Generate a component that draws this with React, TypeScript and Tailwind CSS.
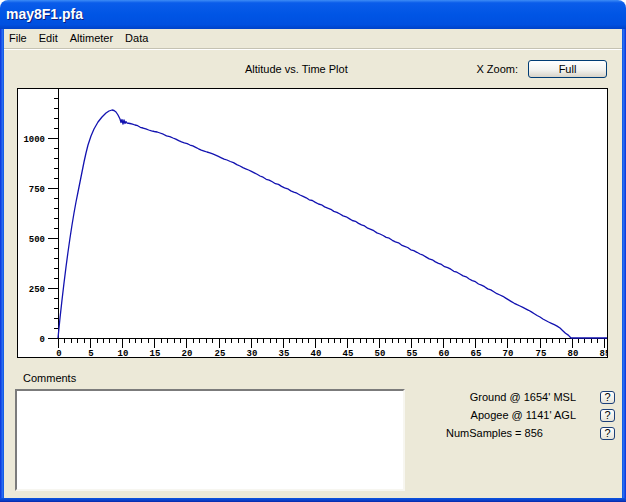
import React from 'react';

// plot geometry (svg coords, box origin at page 17,88)
const PLOT_W = 591;
const PLOT_H = 270;
const OX = 41;
const OY = 250;
const PX_PER_SEC = 6.42;
const PX_PER_FT = 0.2;

// altitude trace, traced in page pixels
const anchors: [number, number][] = [
  [58, 338], [60, 318], [62, 300], [64, 283], [66, 267], [68, 252], [70, 238],
  [72, 225], [74, 213], [76, 202], [78, 192], [80, 182], [82, 172], [84, 162],
  [86, 153], [88, 145], [91, 136], [94, 129], [98, 122], [102, 117], [106, 113],
  [109, 111], [112, 110], [114, 110.5],
  [116, 112], [118, 115], [120, 119], [121, 122.5], [122, 119.5], [123, 124],
  [124, 120], [125, 123.5], [126, 121.5], [127, 123], [130, 123.5], [135, 125],
  [143, 128], [160, 133], [173, 138], [190, 145], [207, 152], [227, 160],
  [240, 166], [260, 176], [300, 195], [340, 214], [380, 234], [420, 254],
  [460, 274], [500, 295], [520, 306], [540, 317], [560, 328], [571, 338], [607, 338],
];

function buildTrace() {
  const out: string[] = [];
  for (let i = 0; i < anchors.length - 1; i++) {
    const [x1, y1] = anchors[i];
    const [x2, y2] = anchors[i + 1];
    const steps = x1 >= 130 && x2 <= 571 ? Math.max(1, Math.round((x2 - x1) / 3)) : 1;
    for (let k = 0; k < steps; k++) {
      const t = k / steps;
      const x = x1 + (x2 - x1) * t;
      let y = y1 + (y2 - y1) * t;
      if (k > 0) y += Math.sin(x * 12.9898) * 0.4;
      out.push(`${(x - 17).toFixed(1)},${(y - 88).toFixed(1)}`);
    }
  }
  const [lx, ly] = anchors[anchors.length - 1];
  out.push(`${lx - 17},${ly - 88}`);
  return out.join(' ');
}

function AltitudePlot() {
  const xTicks = Array.from({ length: 86 }, (_, s) => s);
  const yTicks = Array.from({ length: 25 }, (_, i) => i * 50);

  return (
    <svg width={PLOT_W} height={PLOT_H} className="block bg-white">
      <g stroke="#000" strokeWidth={1} shapeRendering="crispEdges">
        <line x1={OX + 0.5} y1={0} x2={OX + 0.5} y2={OY + 1} />
        <line x1={OX} y1={OY + 0.5} x2={PLOT_W} y2={OY + 0.5} />
        {yTicks.map((v) => {
          const y = OY - v * PX_PER_FT + 0.5;
          const major = v % 250 === 0;
          return <line key={v} x1={major ? 31 : 37} y1={y} x2={OX} y2={y} />;
        })}
        {xTicks.map((s) => {
          const x = Math.round(OX + s * PX_PER_SEC) + 0.5;
          const major = s % 5 === 0;
          return <line key={s} x1={x} y1={OY} x2={x} y2={OY + (major ? 10 : 5)} />;
        })}
      </g>

      <g fontFamily="'Liberation Mono', 'DejaVu Sans Mono', monospace" fontWeight="bold" fontSize={9} fill="#000">
        {[0, 250, 500, 750, 1000].map((v) => (
          <text key={v} x={28} y={OY - v * PX_PER_FT + 3.5} textAnchor="end">
            {v}
          </text>
        ))}
        {xTicks
          .filter((s) => s % 5 === 0)
          .map((s) => (
            <text key={s} x={Math.round(OX + s * PX_PER_SEC) + 1} y={268} textAnchor="middle">
              {s}
            </text>
          ))}
      </g>

      <polyline points={buildTrace()} fill="none" stroke="#1212b0" strokeWidth={1.3} strokeLinejoin="round" />

      <rect x={0.5} y={0.5} width={PLOT_W - 1} height={PLOT_H - 1} fill="none" stroke="#000" shapeRendering="crispEdges" />
    </svg>
  );
}

function HelpButton() {
  return (
    <button className="w-[15px] h-[13px] flex items-center justify-center rounded-[3px] border border-[#1c3f78] bg-[linear-gradient(180deg,#ffffff,#e6e4da)] text-[11px] leading-none text-black">
      ?
    </button>
  );
}

export default function App() {
  return (
    <div className="w-[626px] h-[502px] bg-white font-['Liberation_Sans',Arial,sans-serif] text-black text-[11px]">
      <div className="h-full flex flex-col rounded-t-[8px] overflow-hidden">
        {/* title bar */}
        <div className="h-[29px] shrink-0 flex items-center pl-[6px] bg-[linear-gradient(180deg,#3d8cf6_0%,#0a5cea_10%,#0055e5_50%,#0050e0_85%,#0042c8_100%)]">
          <span className="text-white font-bold text-[14px] [text-shadow:1px_1px_0_#0a1e7e]">may8F1.pfa</span>
        </div>

        <div className="flex-1 flex">
          <div className="w-[4px] bg-[linear-gradient(90deg,#0831d9,#2a6ef2_60%,#0b55e0)]" />

          <div className="flex-1 flex flex-col bg-[#ECE9D8]">
            {/* menu bar */}
            <div className="h-[19px] flex items-center gap-[12px] pl-[5px]">
              <span>File</span>
              <span>Edit</span>
              <span>Altimeter</span>
              <span>Data</span>
            </div>
            <div className="h-px bg-[#c5c2b2]" />
            <div className="h-px bg-white" />

            {/* plot header */}
            <div className="mt-[10px] h-[18px] flex items-center">
              <span className="ml-[241px]">Altitude vs. Time Plot</span>
              <span className="ml-auto mr-[10px]">X Zoom:</span>
              <button className="w-[79px] h-[18px] mr-[15px] rounded-[3px] border border-[#003c74] bg-[linear-gradient(180deg,#ffffff,#f3f3ef_55%,#d8d3c8)] text-[11px] leading-none">
                Full
              </button>
            </div>

            {/* plot */}
            <div className="mt-[10px] ml-[13px]">
              <AltitudePlot />
            </div>

            {/* comments + flight info */}
            <div className="flex-1 flex">
              <div className="ml-[11px] w-[390px] flex flex-col">
                <span className="mt-[14px] pl-[8px] h-[13px] leading-[13px]">Comments</span>
                <div className="mt-[4px] h-[102px] bg-white border-2 border-t-[#7b7b7b] border-l-[#7b7b7b] border-r-[#f7f6f0] border-b-[#f7f6f0]" />
              </div>

              <div className="ml-auto pr-[7px] pt-[33px] flex flex-col gap-[5px]">
                <div className="h-[13px] flex items-center gap-[24px]">
                  <span className="w-[130px] text-right">Ground @ 1654' MSL</span>
                  <HelpButton />
                </div>
                <div className="h-[13px] flex items-center gap-[24px]">
                  <span className="w-[130px] text-right">Apogee @ 1141' AGL</span>
                  <HelpButton />
                </div>
                <div className="h-[13px] flex items-center gap-[24px]">
                  <span className="w-[130px]">NumSamples = 856</span>
                  <HelpButton />
                </div>
              </div>
            </div>
          </div>

          <div className="w-[4px] bg-[linear-gradient(90deg,#0b55e0,#2a6ef2_40%,#0831d9)]" />
        </div>

        <div className="h-[4px] shrink-0 bg-[linear-gradient(180deg,#0b55e0,#0a3fc8_60%,#0728a8)]" />
      </div>
    </div>
  );
}
